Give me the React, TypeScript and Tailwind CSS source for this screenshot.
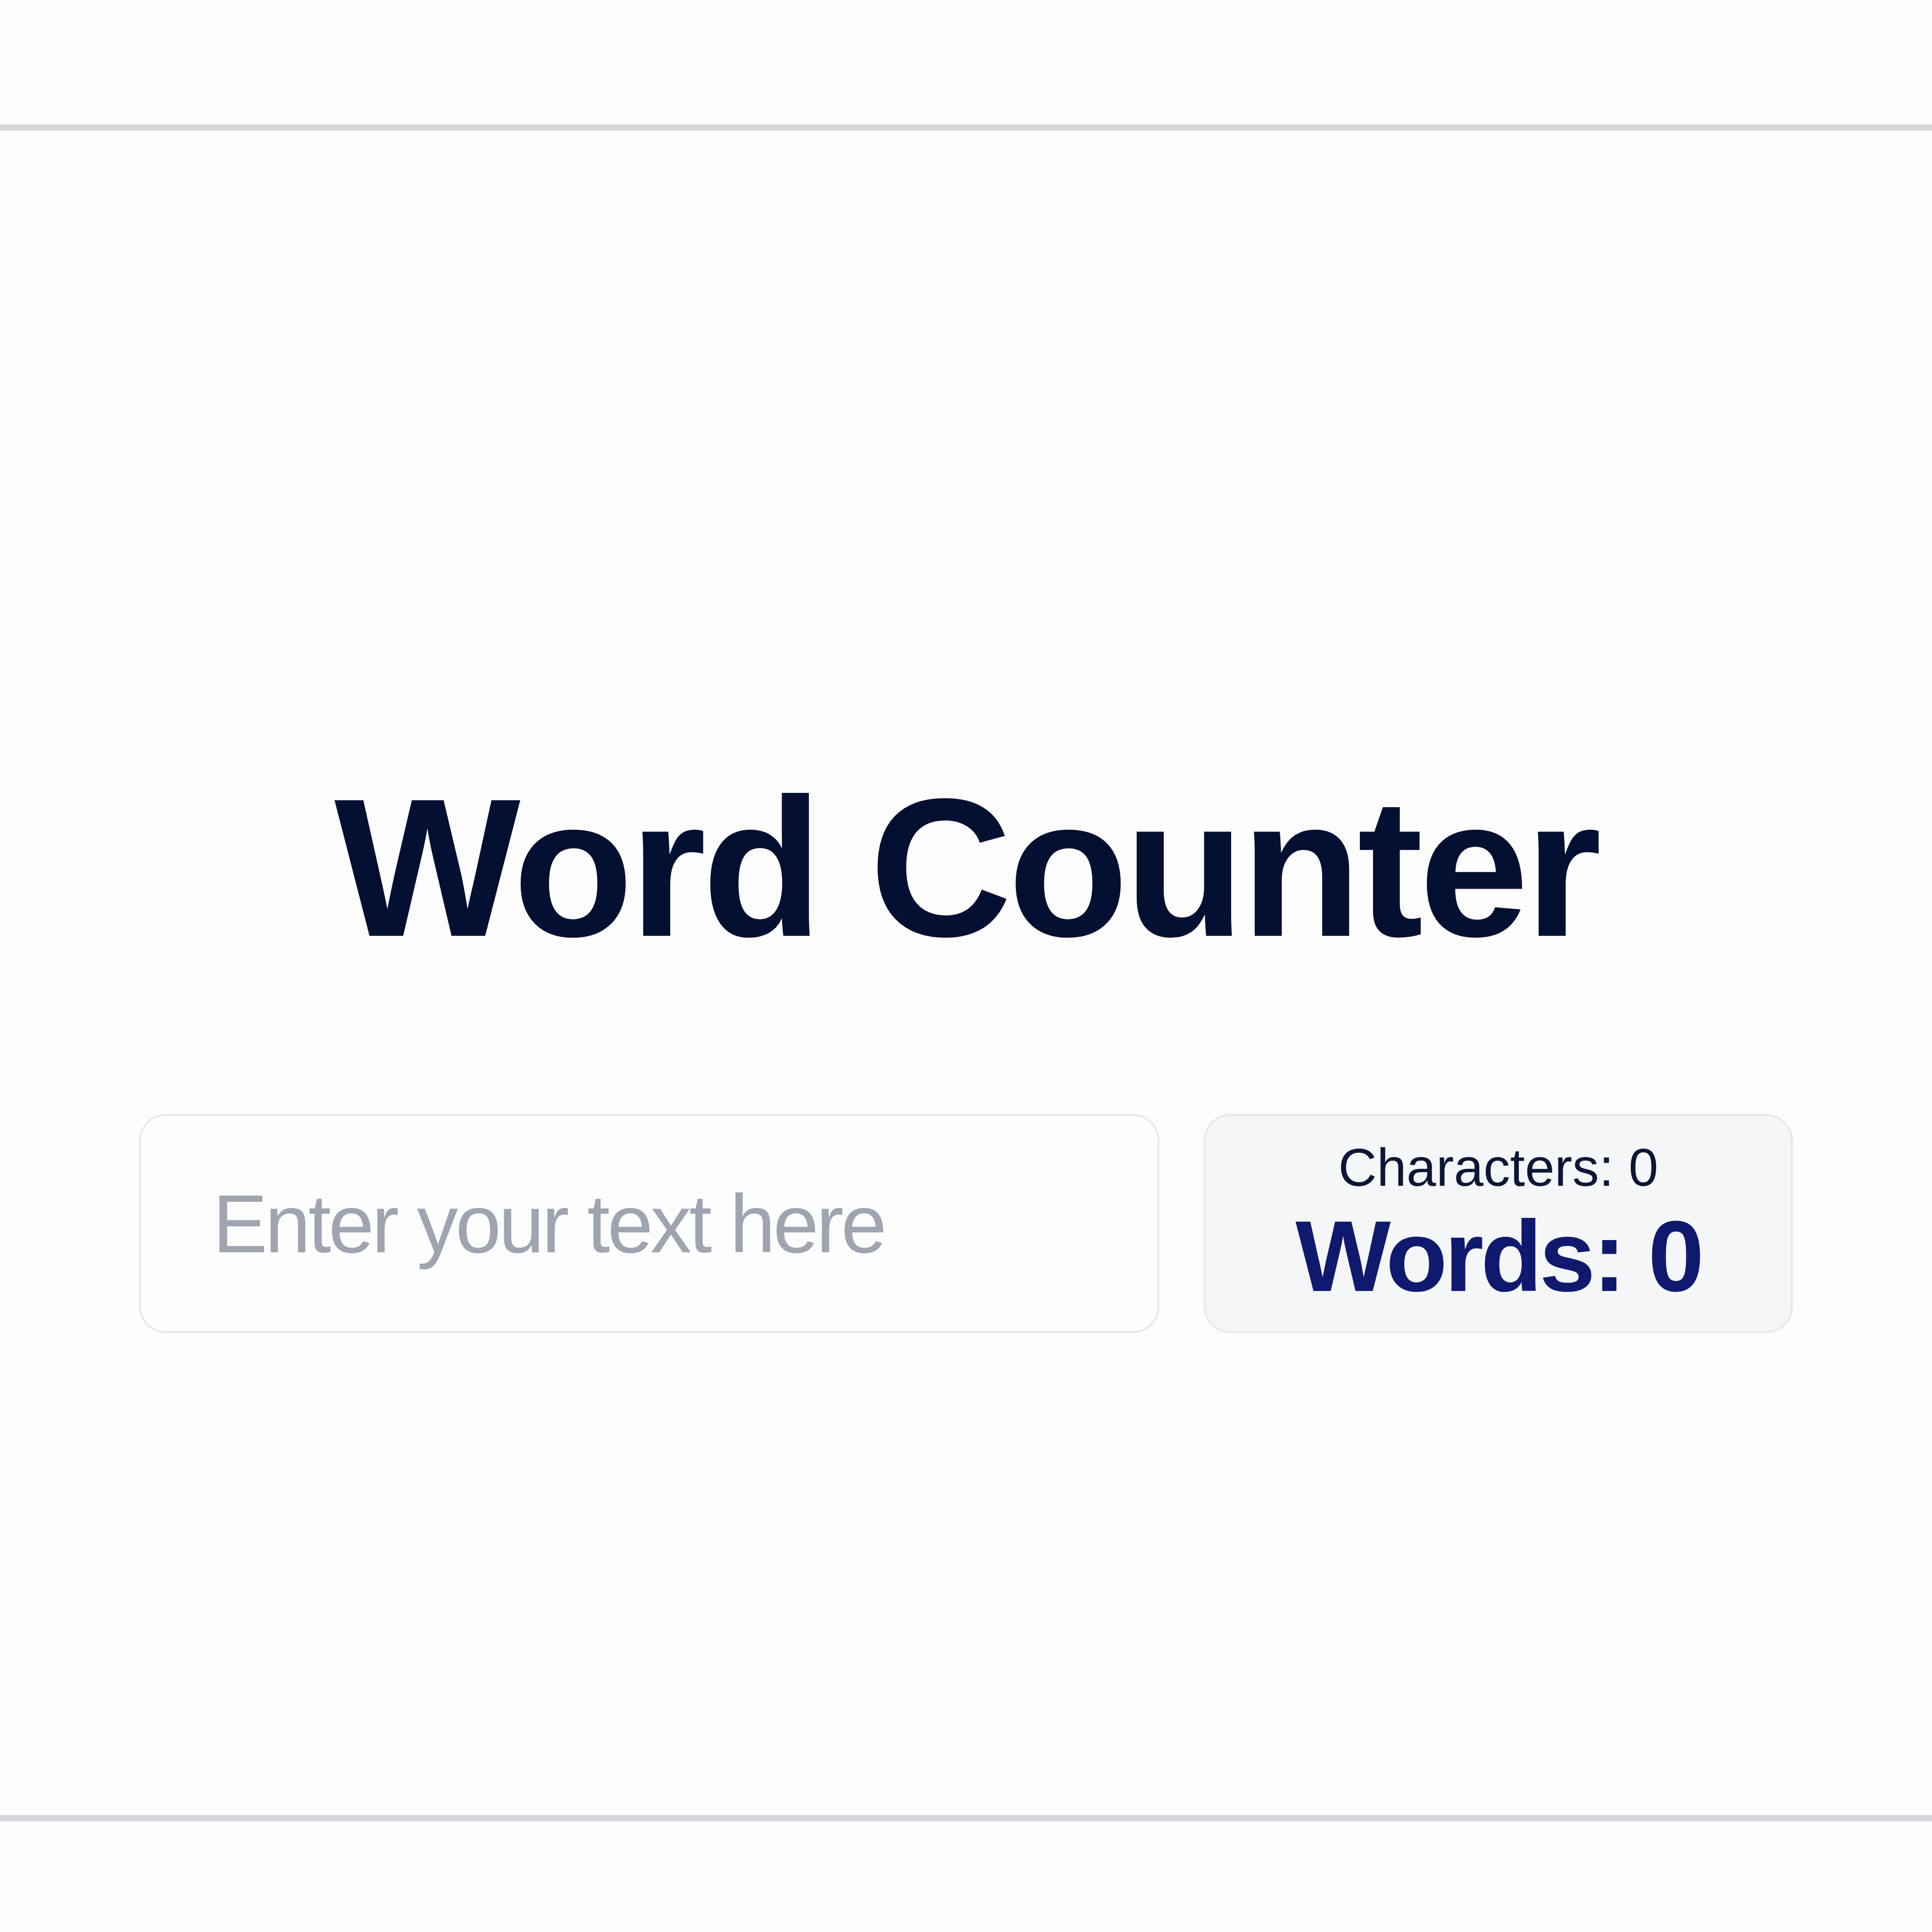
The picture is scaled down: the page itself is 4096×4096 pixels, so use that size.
import React, { useState } from "react";

export default function App() {
  const [text, setText] = useState("");
  const chars = text.length;
  const words = text.trim() === "" ? 0 : text.trim().split(/\s+/).length;

  return (
    <div
      className="w-[4096px] h-[4096px] bg-[#fcfcfc] flex flex-col"
      style={{ fontFamily: '"Liberation Sans", Arial, sans-serif' }}
    >
      <div className="h-[264px] shrink-0" />
      <div className="h-[13px] shrink-0 bg-[#d4d6db]" />
      <main className="h-[3571px] shrink-0 flex flex-col items-center pt-[1354px]">
        <h1 className="text-[418px] leading-none font-bold tracking-[-0.02em] text-[#041031]">
          Word Counter
        </h1>
        <div className="mt-[313px] flex gap-[94px]">
          <div className="w-[2163px] h-[464px] rounded-[56px] border-[4px] border-[#e7e8eb] bg-[#fdfdfd] flex items-center">
            <input
              value={text}
              onChange={(e) => setText(e.target.value)}
              placeholder="Enter your text here"
              className="w-full h-full bg-transparent outline-none pl-[152px] pr-[80px] text-[174px] tracking-[-0.03em] text-[#0f172a] placeholder:text-[#9ea4b0]"
              style={{ fontFamily: '"Liberation Sans", Arial, sans-serif' }}
            />
          </div>
          <div className="w-[1249px] h-[464px] rounded-[56px] border-[4px] border-[#e7e8eb] bg-[#f5f6f8] flex flex-col items-center justify-center gap-[24px]">
            <div className="text-[113px] leading-none text-[#0c1636]">
              Characters: {chars}
            </div>
            <div className="text-[214px] leading-none font-bold tracking-[-0.03em] text-[#0f1a6f]">
              Words: {words}
            </div>
          </div>
        </div>
      </main>
      <div className="h-[13px] shrink-0 bg-[#d4d6db]" />
      <div className="flex-1" />
    </div>
  );
}
